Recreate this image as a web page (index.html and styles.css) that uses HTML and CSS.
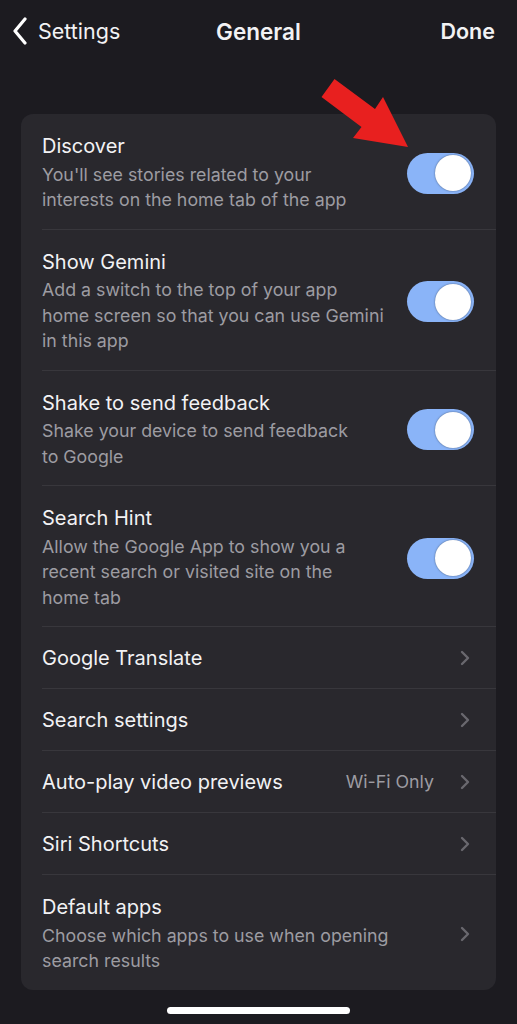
FILE: index.html
```html
<!DOCTYPE html>
<html lang="en">
<head>
    <meta charset="UTF-8">
    <meta name="viewport" content="width=device-width, initial-scale=1.0">
    <title>General</title>
    <link rel="stylesheet" href="styles.css">
</head>
<body>
    <div class="nav">
        <a class="nav-back" href="#">
            <svg width="16" height="28" viewBox="0 0 16 28"><path d="M13 2 L3 14 L13 26" fill="none" stroke="#fff" stroke-width="3.2" stroke-linecap="round" stroke-linejoin="round"/></svg>
            <span>Settings</span>
        </a>
        <div class="nav-title">General</div>
        <a class="nav-done" href="#">Done</a>
    </div>

    <div class="card">
        <div class="row">
            <div class="row-body">
                <div class="row-text">
                    <div class="row-title">Discover</div>
                    <div class="row-sub">You'll see stories related to your<br>interests on the home tab of the app</div>
                </div>
                <div class="toggle"><div class="knob"></div></div>
            </div>
        </div>
        <div class="row">
            <div class="row-body">
                <div class="row-text">
                    <div class="row-title">Show Gemini</div>
                    <div class="row-sub">Add a switch to the top of your app<br>home screen so that you can use Gemini<br>in this app</div>
                </div>
                <div class="toggle"><div class="knob"></div></div>
            </div>
        </div>
        <div class="row">
            <div class="row-body">
                <div class="row-text">
                    <div class="row-title">Shake to send feedback</div>
                    <div class="row-sub">Shake your device to send feedback<br>to Google</div>
                </div>
                <div class="toggle"><div class="knob"></div></div>
            </div>
        </div>
        <div class="row">
            <div class="row-body">
                <div class="row-text">
                    <div class="row-title">Search Hint</div>
                    <div class="row-sub">Allow the Google App to show you a<br>recent search or visited site on the<br>home tab</div>
                </div>
                <div class="toggle"><div class="knob"></div></div>
            </div>
        </div>
        <div class="row">
            <div class="row-body simple">
                <div class="row-text"><div class="row-title">Google Translate</div></div>
                <svg class="chevron" width="10" height="16" viewBox="0 0 10 16"><path d="M2 2 L8 8 L2 14" fill="none" stroke="#69686e" stroke-width="2.4" stroke-linecap="round" stroke-linejoin="round"/></svg>
            </div>
        </div>
        <div class="row">
            <div class="row-body simple">
                <div class="row-text"><div class="row-title">Search settings</div></div>
                <svg class="chevron" width="10" height="16" viewBox="0 0 10 16"><path d="M2 2 L8 8 L2 14" fill="none" stroke="#69686e" stroke-width="2.4" stroke-linecap="round" stroke-linejoin="round"/></svg>
            </div>
        </div>
        <div class="row">
            <div class="row-body simple">
                <div class="row-text"><div class="row-title">Auto-play video previews</div></div>
                <span class="row-value">Wi-Fi Only</span>
                <svg class="chevron" width="10" height="16" viewBox="0 0 10 16"><path d="M2 2 L8 8 L2 14" fill="none" stroke="#69686e" stroke-width="2.4" stroke-linecap="round" stroke-linejoin="round"/></svg>
            </div>
        </div>
        <div class="row">
            <div class="row-body simple">
                <div class="row-text"><div class="row-title">Siri Shortcuts</div></div>
                <svg class="chevron" width="10" height="16" viewBox="0 0 10 16"><path d="M2 2 L8 8 L2 14" fill="none" stroke="#69686e" stroke-width="2.4" stroke-linecap="round" stroke-linejoin="round"/></svg>
            </div>
        </div>
        <div class="row last">
            <div class="row-body">
                <div class="row-text">
                    <div class="row-title">Default apps</div>
                    <div class="row-sub">Choose which apps to use when opening<br>search results</div>
                </div>
                <svg class="chevron" width="10" height="16" viewBox="0 0 10 16"><path d="M2 2 L8 8 L2 14" fill="none" stroke="#69686e" stroke-width="2.4" stroke-linecap="round" stroke-linejoin="round"/></svg>
            </div>
        </div>
    </div>

    <div class="home-bar"></div>

    <!-- red annotation arrow pointing at the Discover switch -->
    <svg class="arrow" width="517" height="170" viewBox="0 0 517 170">
        <polygon points="334.5,79 375,109 383,97 408,147 353,138 361.5,127 321.5,97" fill="#e8201f"/>
    </svg>
</body>
</html>
```

FILE: styles.css
```css
body {
    margin: 0;
    background-color: #1c1b20;
    font-family: "Inter", "Liberation Sans", sans-serif;
    color: #f2f2f4;
    position: relative;
    min-height: 1024px;
}

a {
    color: inherit;
    text-decoration: none;
}

.nav {
    height: 62px;
    display: flex;
    align-items: center;
    justify-content: space-between;
    padding: 0 22px 0 12px;
    font-size: 21.5px;
    position: relative;
}

.nav-back {
    display: flex;
    align-items: center;
    gap: 10px;
}

.nav-title {
    position: absolute;
    left: 0;
    right: 0;
    text-align: center;
    font-weight: 600;
    font-size: 22.5px;
    pointer-events: none;
}

.nav-done {
    font-weight: 600;
}

.card {
    margin: 52px 21px 0;
    background-color: #29282d;
    border-radius: 12px;
    overflow: hidden;
}

.row {
    padding-left: 21px;
}

.row-body {
    display: flex;
    align-items: center;
    padding: 20px 22px 16px 0;
    border-bottom: 1px solid #38373c;
}

.row-body.simple {
    padding: 18.5px 22px 18.5px 0;
}

.row.last .row-body {
    border-bottom: none;
}

.row-text {
    flex: 1;
}

.row-title {
    font-size: 20px;
    line-height: 24px;
}

.row-sub {
    margin-top: 3.5px;
    font-size: 17.8px;
    line-height: 25.5px;
    color: #9d9ca2;
}

.row-value {
    font-size: 17.8px;
    color: #9d9ca2;
    margin-right: 26px;
}

.chevron {
    margin-right: 4px;
}

.toggle {
    width: 67px;
    height: 41px;
    border-radius: 21px;
    background-color: #8ab4f8;
    display: flex;
    align-items: center;
    justify-content: flex-end;
    padding-right: 3px;
    box-sizing: border-box;
}

.knob {
    width: 36px;
    height: 36px;
    border-radius: 50%;
    background-color: #fff;
    box-shadow: 0 0 2px rgba(0, 0, 0, 0.5);
}

.home-bar {
    width: 183px;
    height: 7px;
    border-radius: 4px;
    background-color: #fff;
    margin: 17px auto 0;
}

.arrow {
    position: absolute;
    left: 0;
    top: 0;
    pointer-events: none;
}
```
